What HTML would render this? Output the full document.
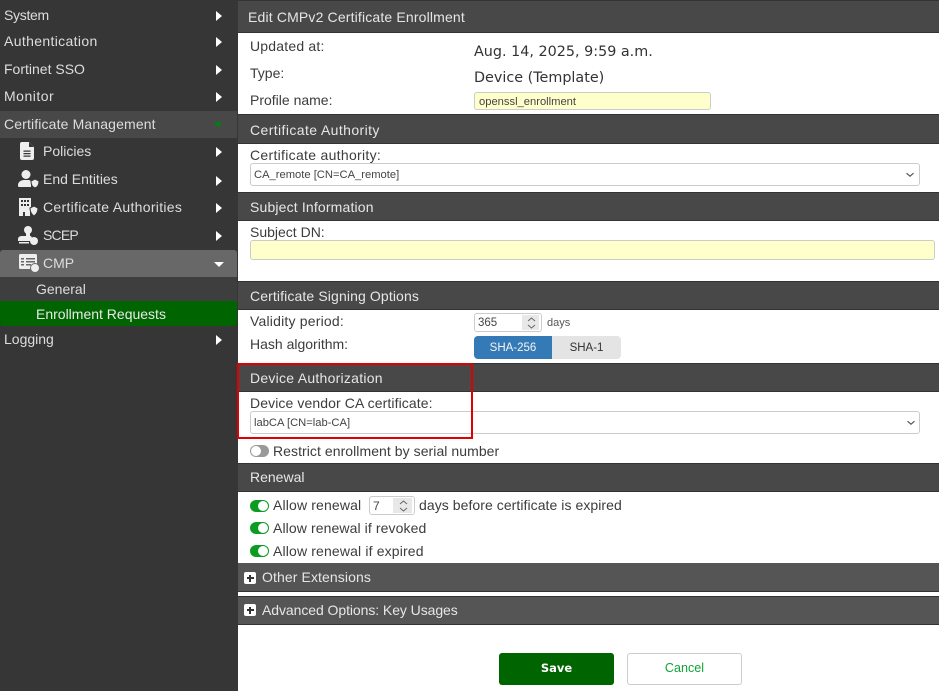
<!DOCTYPE html>
<html><head><meta charset="utf-8">
<style>
html,body{margin:0;padding:0}
body{width:939px;height:691px;position:relative;overflow:hidden;background:#fff;font-family:"Liberation Sans",sans-serif;font-size:14px;color:#3c3c3c}
.a{position:absolute;white-space:nowrap}
.s{position:absolute;left:0;width:237px;height:27px;line-height:27px;color:#ddd;white-space:nowrap;font-size:14px}
.t{position:absolute;left:4px}
.ar{position:absolute;left:216px;width:0;height:0;border-left:6px solid #fff;border-top:5px solid transparent;border-bottom:5px solid transparent}
.hd{position:absolute;left:238px;width:701px;background:#484848;color:#e6e6e6;border-top:1px solid #333;border-bottom:1px solid #333;box-sizing:border-box;font-size:14px;padding-left:12px}
.l{position:absolute;left:250px;white-space:nowrap;color:#3c3c3c;font-size:14px;line-height:16px}
.d{font-family:"DejaVu Sans",sans-serif;font-size:14.35px;color:#333;position:absolute;left:474px;line-height:16px;white-space:nowrap}
.inp{position:absolute;box-sizing:border-box;border:1px solid #ccc;border-radius:3px;background:#fff;font-size:11.2px;color:#444;padding-left:3px}
.tg{position:absolute;left:250px;width:19px;height:12px;border-radius:6px;background:#0c9c22}
.tg i{position:absolute;right:1px;top:1px;width:10px;height:10px;border-radius:50%;background:#fff}
.spin{position:absolute;top:1px;right:2px;bottom:1px;width:17px;background:#e8e8e8}
.plus{position:absolute;left:244px;width:12px;height:12px;background:#fff;border-radius:2px;color:#333}
.plus:before{content:"";position:absolute;left:2.500px;top:5.250px;width:7px;height:1.500px;background:#333}
.plus:after{content:"";position:absolute;left:5.250px;top:2.500px;width:1.500px;height:7px;background:#333}
svg{position:absolute}
</style></head><body>
<div class="a" style="left:0;top:0;width:238px;height:691px;background:#363636"></div>

<div class="s" style="top:2px"><span class="t" style="letter-spacing:-.3px">System</span><i class="ar" style="top:9px"></i></div>
<div class="s" style="top:28px"><span class="t" style="letter-spacing:.35px">Authentication</span><i class="ar" style="top:9px"></i></div>
<div class="s" style="top:56px"><span class="t">Fortinet SSO</span><i class="ar" style="top:9px"></i></div>
<div class="s" style="top:83px"><span class="t" style="letter-spacing:.5px">Monitor</span><i class="ar" style="top:9px"></i></div>
<div class="s" style="top:111px;background:#484848;height:27px"><span class="t" style="letter-spacing:.14px">Certificate Management</span><i style="position:absolute;left:214px;top:11px;width:0;height:0;border-top:6px solid #0a7a14;border-left:4.500px solid transparent;border-right:4.500px solid transparent"></i></div>

<div class="s" style="top:138px"><span class="t" style="left:43px">Policies</span><i class="ar" style="top:9px"></i></div>
<svg style="left:20px;top:142px" width="15" height="18" viewBox="0 0 15 18"><path fill="#eee" d="M2 0h7l5 5v11a2 2 0 0 1-2 2H2a2 2 0 0 1-2-2V2a2 2 0 0 1 2-2z"/><path fill="#363636" d="M9 0v5h5zM3.500 8.500h7v1.200h-7zM3.500 11h7v1.200h-7zM3.500 13.500h7v1.200h-7z"/></svg>

<div class="s" style="top:166px"><span class="t" style="left:43px">End Entities</span><i class="ar" style="top:10px"></i></div>
<svg style="left:18px;top:170px" width="22" height="18" viewBox="0 0 22 18"><circle cx="8" cy="4.500" r="4.500" fill="#eee"/><path fill="#eee" d="M1 17c-1 0-1-1-1-2 0-3 3-5 6-5h5l2 1v6z"/><path fill="#eee" stroke="#363636" d="M13 11l4-2 4 2c0 3-1 6-4 7-3-1-4-4-4-7z"/></svg>

<div class="s" style="top:194px"><span class="t" style="left:43px;letter-spacing:.3px">Certificate Authorities</span><i class="ar" style="top:9px"></i></div>
<svg style="left:19px;top:198px" width="20" height="18" viewBox="0 0 20 18"><path fill="#eee" d="M0 0h12v10h-1v8H6v-4H4v4H0z"/><path fill="#363636" d="M2 2h2v2H2zM5 2h2v2H5zM8 2h2v2H8zM2 6h2v2H2zM5 6h2v2H5zM8 6h2v2H8z"/><path fill="#eee" stroke="#363636" d="M11 10l4-2 4 2c0 3-1 6-4 8-3-2-4-5-4-8z"/></svg>

<div class="s" style="top:222px"><span class="t" style="left:43px;letter-spacing:-.8px">SCEP</span><i class="ar" style="top:9px"></i></div>
<svg style="left:18px;top:226px" width="22" height="19" viewBox="0 0 22 19"><circle cx="10" cy="4" r="4" fill="#eee"/><path fill="#eee" d="M8 7h4v3h1l1 2a6 6 0 0 0-2 3H0v-2c0-2 2-3 4-3h4z"/><path fill="#eee" d="M1 16h10v1.500H1z"/><circle cx="16" cy="15" r="4" fill="#eee"/></svg>

<div class="s" style="top:250px;height:27px;background:#686868;border-radius:3px 3px 0 0"><span class="t" style="left:43px">CMP</span><i style="position:absolute;left:214px;top:12px;width:0;height:0;border-top:5px solid #fff;border-left:5px solid transparent;border-right:5px solid transparent"></i></div>
<svg style="left:19px;top:254px" width="21" height="19" viewBox="0 0 21 19"><rect x="0" y="0" width="18" height="15" rx="1.500" fill="#eee"/><path fill="#686868" d="M2 4h3v1.500H2zM7 4h9v1.500H7zM2 7h3v1.500H2zM7 7h9v1.500H7zM2 10h3v1.500H2zM7 10h5v1.500H7z"/><circle cx="16" cy="14" r="4.500" fill="#eee" stroke="#686868"/></svg>

<div class="s" style="top:277px;height:24px;line-height:24px;background:#3e3e3e"><span class="t" style="left:36px">General</span></div>
<div class="s" style="top:301px;height:25px;line-height:26px;background:#006400;border-radius:0 0 3px 3px;color:#e8e8e8"><span class="t" style="left:36px">Enrollment Requests</span></div>
<div class="s" style="top:326px"><span class="t">Logging</span><i class="ar" style="top:9px"></i></div>

<div class="hd" style="top:0;height:33px;line-height:33px;padding-left:10px;letter-spacing:.16px">Edit CMPv2 Certificate Enrollment</div>
<div class="l" style="top:38px;letter-spacing:.2px">Updated at:</div>
<div class="d" style="top:44px">Aug. 14, 2025, 9:59 a.m.</div>
<div class="l" style="top:65px">Type:</div>
<div class="d" style="top:70px">Device (Template)</div>
<div class="l" style="top:92px">Profile name:</div>
<div class="inp" style="left:474px;top:92px;width:237px;height:18px;line-height:18px;background:#ffffcc;padding-left:4px">openssl_enrollment</div>

<div class="hd" style="top:114px;height:30px;line-height:30px;letter-spacing:.4px">Certificate Authority</div>
<div class="l" style="top:147px;letter-spacing:.3px">Certificate authority:</div>
<div class="inp" style="left:250px;top:163px;width:670px;height:23px;line-height:22.500px">CA_remote [CN=CA_remote]</div>
<svg style="left:905px;top:172px" width="10" height="6" viewBox="0 0 10 6"><path d="M1.500 1.200l3.500 3 3.500-3" fill="none" stroke="#555" stroke-width="1.200"/></svg>

<div class="hd" style="top:192px;height:29px;line-height:28px;letter-spacing:.16px">Subject Information</div>
<div class="l" style="top:224px">Subject DN:</div>
<div class="inp" style="left:250px;top:240px;width:685px;height:20px;background:#ffffcc"></div>

<div class="hd" style="top:281px;height:29px;line-height:28px;letter-spacing:.12px">Certificate Signing Options</div>
<div class="l" style="top:313px;letter-spacing:.2px">Validity period:</div>
<div class="inp" style="left:474px;top:313px;width:68px;height:19px;line-height:18px;overflow:hidden;font-size:11.500px">365<div class="spin"></div>
<svg style="right:5px;top:2px" width="9" height="14" viewBox="0 0 9 14"><path d="M1 5l3.500-3L8 5M1 9l3.500 3L8 9" fill="none" stroke="#666" stroke-width="1"/></svg></div>
<div class="a" style="left:547px;top:316px;font-size:11px;color:#555;line-height:14px">days</div>
<div class="l" style="top:336px">Hash algorithm:</div>
<div class="a" style="left:474px;top:336px;width:78px;height:23px;line-height:24px;background:#337ab7;color:#f4f4f4;text-align:center;font-size:11.500px;border-radius:4px 0 0 4px">SHA-256</div>
<div class="a" style="left:552px;top:336px;width:69px;height:23px;line-height:24px;background:#e4e4e4;color:#333;text-align:center;font-size:11.500px;border-radius:0 4px 4px 0">SHA-1</div>

<div class="hd" style="top:363px;height:29px;line-height:29px;letter-spacing:.26px">Device Authorization</div>
<div class="l" style="top:395px;letter-spacing:.1px">Device vendor CA certificate:</div>
<div class="inp" style="left:250px;top:411px;width:670px;height:23px;line-height:22.500px">labCA [CN=lab-CA]</div>
<svg style="left:906px;top:420px" width="10" height="6" viewBox="0 0 10 6"><path d="M1.500 1.200l3.500 3 3.500-3" fill="none" stroke="#555" stroke-width="1.200"/></svg>
<div class="a" style="left:237px;top:363px;width:236px;height:76px;box-sizing:border-box;border:2px solid #e00000"></div>

<div class="tg" style="top:445px;background:#999"><i style="left:1px;right:auto"></i></div>
<div class="l" style="left:273px;top:443px;letter-spacing:.06px">Restrict enrollment by serial number</div>

<div class="hd" style="top:463px;height:29px;line-height:27px">Renewal</div>
<div class="tg" style="top:500px"><i></i></div>
<div class="l" style="left:273px;top:497px;letter-spacing:.15px">Allow renewal</div>
<div class="inp" style="left:369px;top:496px;width:46px;height:19px;line-height:18px;padding-left:3px;overflow:hidden;font-size:12px">7<div class="spin" style="width:19px"></div>
<svg style="right:6px;top:2px" width="9" height="14" viewBox="0 0 9 14"><path d="M1 5l3.500-3L8 5M1 9l3.500 3L8 9" fill="none" stroke="#666" stroke-width="1"/></svg></div>
<div class="l" style="left:419px;top:497px;letter-spacing:.06px">days before certificate is expired</div>
<div class="tg" style="top:522px"><i></i></div>
<div class="l" style="left:273px;top:520px;letter-spacing:.1px">Allow renewal if revoked</div>
<div class="tg" style="top:545px"><i></i></div>
<div class="l" style="left:273px;top:543px;letter-spacing:.15px">Allow renewal if expired</div>

<div class="hd" style="top:563px;height:29px;line-height:29px;padding-left:24px;background:#555;border-top:0;color:#e6e6e6;letter-spacing:.1px">Other Extensions</div>
<div class="plus" style="top:572px"></div>
<div class="hd" style="top:596px;height:29px;line-height:27px;padding-left:24px;background:#555;color:#e6e6e6;letter-spacing:-.07px">Advanced Options: Key Usages</div>
<div class="plus" style="top:604px"></div>

<div class="a" style="left:499px;top:653px;width:115px;height:32px;background:#006400;border-radius:3px;color:#fff;text-align:center;font:bold 11.500px/31px 'DejaVu Sans',sans-serif">Save</div>
<div class="a" style="left:627px;top:653px;width:115px;height:32px;box-sizing:border-box;border:1px solid #ccc;border-radius:3px;background:#fff;color:#12a33a;text-align:center;font-size:12.600px;line-height:29px">Cancel</div>
</body></html>
